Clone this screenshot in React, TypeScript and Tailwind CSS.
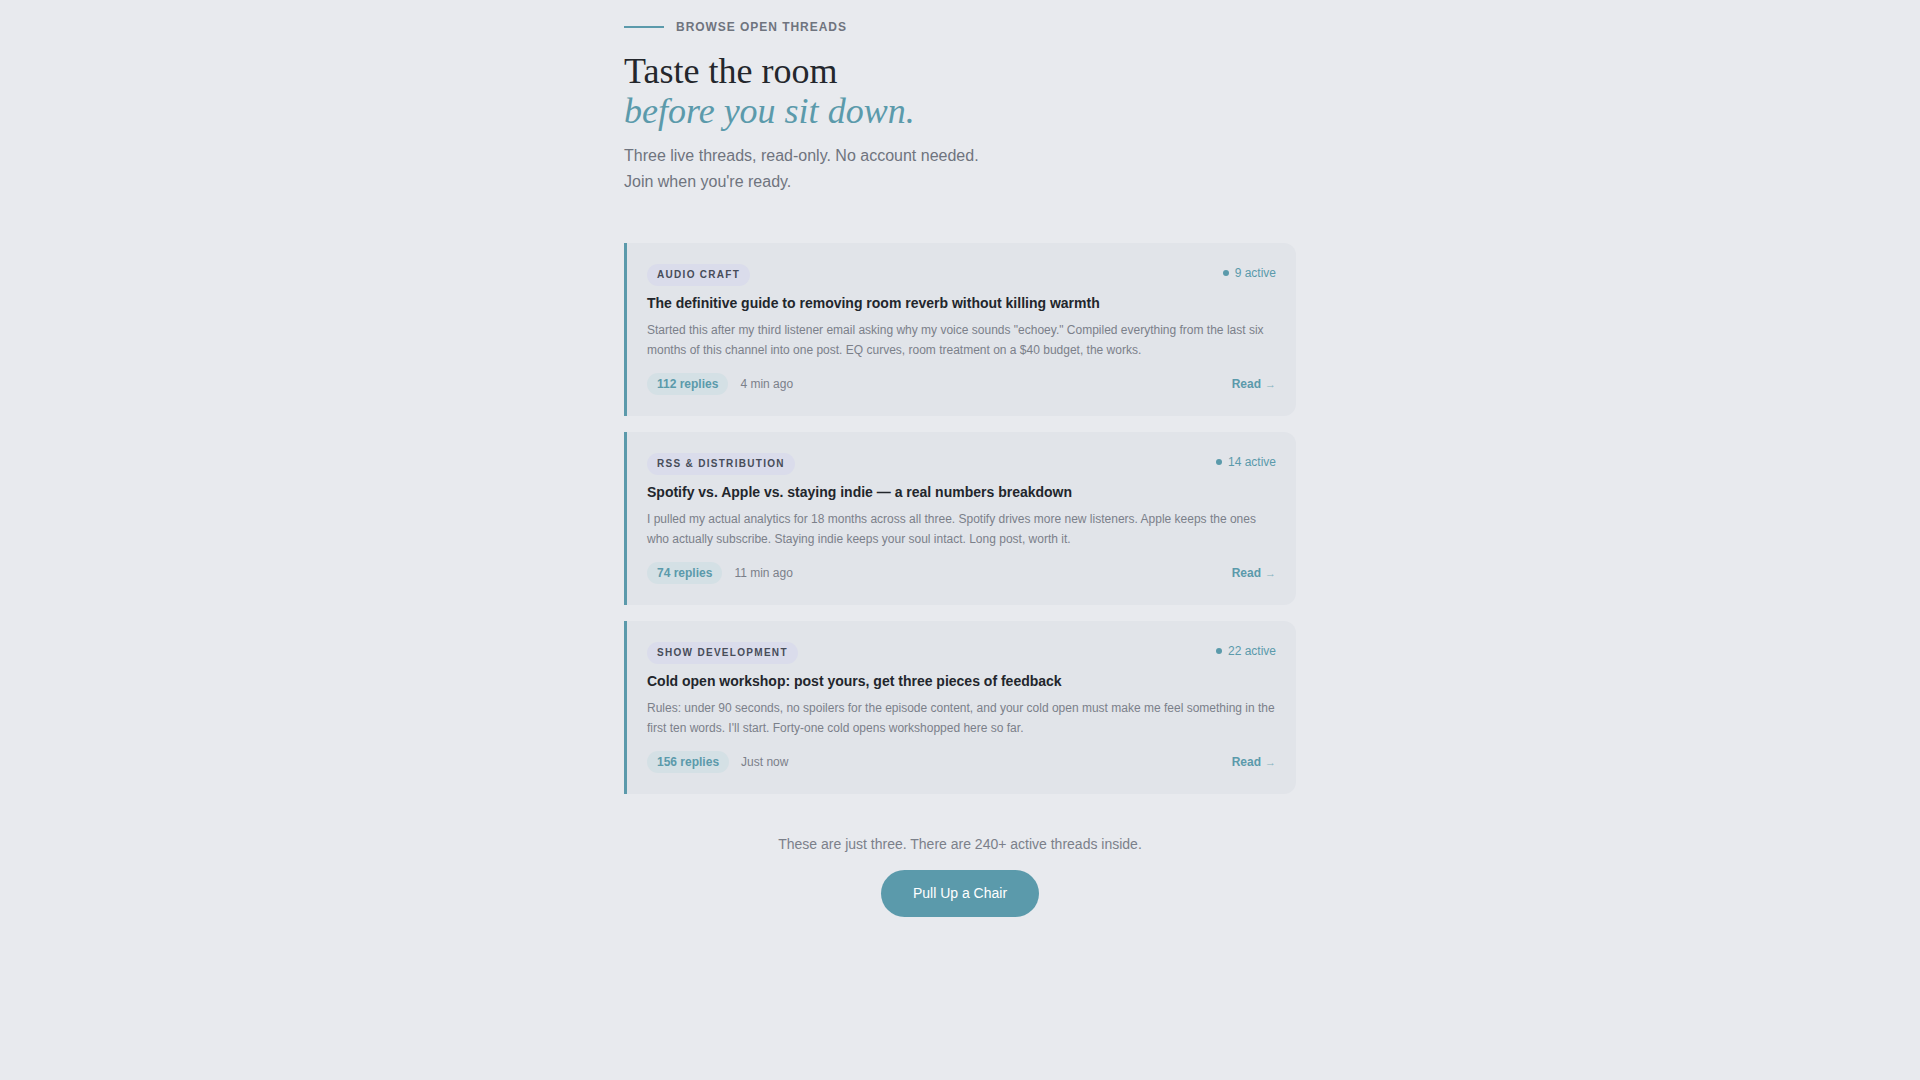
// Open-threads preview — a read-only taste of three live threads.

type Thread = {
  tag: string
  title: string
  body: string
  replies: number
  when: string
  active: number
}

const threads: Thread[] = [
  {
    tag: 'Audio Craft',
    title: 'The definitive guide to removing room reverb without killing warmth',
    body: 'Started this after my third listener email asking why my voice sounds "echoey." Compiled everything from the last six months of this channel into one post. EQ curves, room treatment on a $40 budget, the works.',
    replies: 112,
    when: '4 min ago',
    active: 9,
  },
  {
    tag: 'RSS & Distribution',
    title: 'Spotify vs. Apple vs. staying indie — a real numbers breakdown',
    body: 'I pulled my actual analytics for 18 months across all three. Spotify drives more new listeners. Apple keeps the ones who actually subscribe. Staying indie keeps your soul intact. Long post, worth it.',
    replies: 74,
    when: '11 min ago',
    active: 14,
  },
  {
    tag: 'Show Development',
    title: 'Cold open workshop: post yours, get three pieces of feedback',
    body: "Rules: under 90 seconds, no spoilers for the episode content, and your cold open must make me feel something in the first ten words. I'll start. Forty-one cold opens workshopped here so far.",
    replies: 156,
    when: 'Just now',
    active: 22,
  },
]

function ThreadCard({ t }: { t: Thread }) {
  return (
    <div className="rounded-r-xl border-l-[3px] border-[#5b9aab] bg-[#e1e4e9] px-5 pt-[21px] pb-[21px]">
      <div className="flex items-start justify-between">
        <span className="inline-flex h-[22px] items-center rounded-full bg-[#dadceb] px-2.5 text-[10px] font-bold uppercase leading-3 tracking-[0.13em] text-[#474c59]">
          {t.tag}
        </span>
        <span className="flex items-center gap-1.5 text-[12px] leading-[18px] text-[#5b9aab]">
          <span className="h-1.5 w-1.5 rounded-full bg-[#5b9aab]" />
          {t.active} active
        </span>
      </div>
      <h3 className="mt-[7px] text-[14px] font-bold leading-5 text-[#22262c]">{t.title}</h3>
      <p className="mt-[7px] text-[12px] leading-5 text-[#7b808a]">{t.body}</p>
      <div className="mt-[13px] flex items-center justify-between">
        <div className="flex items-center gap-3">
          <span className="inline-flex h-[22px] items-center rounded-full bg-[#d4e0e5] px-2.5 text-[12px] font-bold text-[#5b9aab]">
            {t.replies} replies
          </span>
          <span className="text-[12px] text-[#7b808a]">{t.when}</span>
        </div>
        <a className="flex items-baseline text-[12px] font-bold text-[#5b9aab]">
          Read <span className="ml-1 text-[11px] font-normal opacity-70">→</span>
        </a>
      </div>
    </div>
  )
}

export default function App() {
  return (
    <div className="min-h-screen bg-[#e8eaee] font-['Liberation_Sans',Arial,sans-serif]">
      <div className="mx-auto max-w-[672px] pt-[19px] pb-24">
        {/* Eyebrow */}
        <div className="flex items-center gap-3">
          <span className="h-0.5 w-10 bg-[#5b9aab]" />
          <span className="text-[12px] font-bold uppercase leading-4 tracking-[0.08em] text-[#6f747e]">
            Browse open threads
          </span>
        </div>

        {/* Heading */}
        <h1 className="mt-[16px] font-['Liberation_Serif','Times_New_Roman',serif] text-[36px] font-normal leading-[40px] text-[#24272c]">
          Taste the room
          <br />
          <em className="text-[#5b9aab]">before you sit down.</em>
        </h1>
        <p className="mt-[12px] text-[16px] leading-[26px] text-[#6f747e]">
          Three live threads, read-only. No account needed.
          <br />
          Join when you're ready.
        </p>

        {/* Threads */}
        <div className="mt-12 flex flex-col gap-4">
          {threads.map((t) => (
            <ThreadCard key={t.tag} t={t} />
          ))}
        </div>

        {/* CTA */}
        <div className="mt-10 flex flex-col items-center">
          <p className="text-[14px] leading-5 text-[#7b808a]">
            These are just three. There are 240+ active threads inside.
          </p>
          <button className="mt-4 h-[47px] rounded-full bg-[#5b9aab] px-8 text-[14px] text-white">
            Pull Up a Chair
          </button>
        </div>
      </div>
    </div>
  )
}
